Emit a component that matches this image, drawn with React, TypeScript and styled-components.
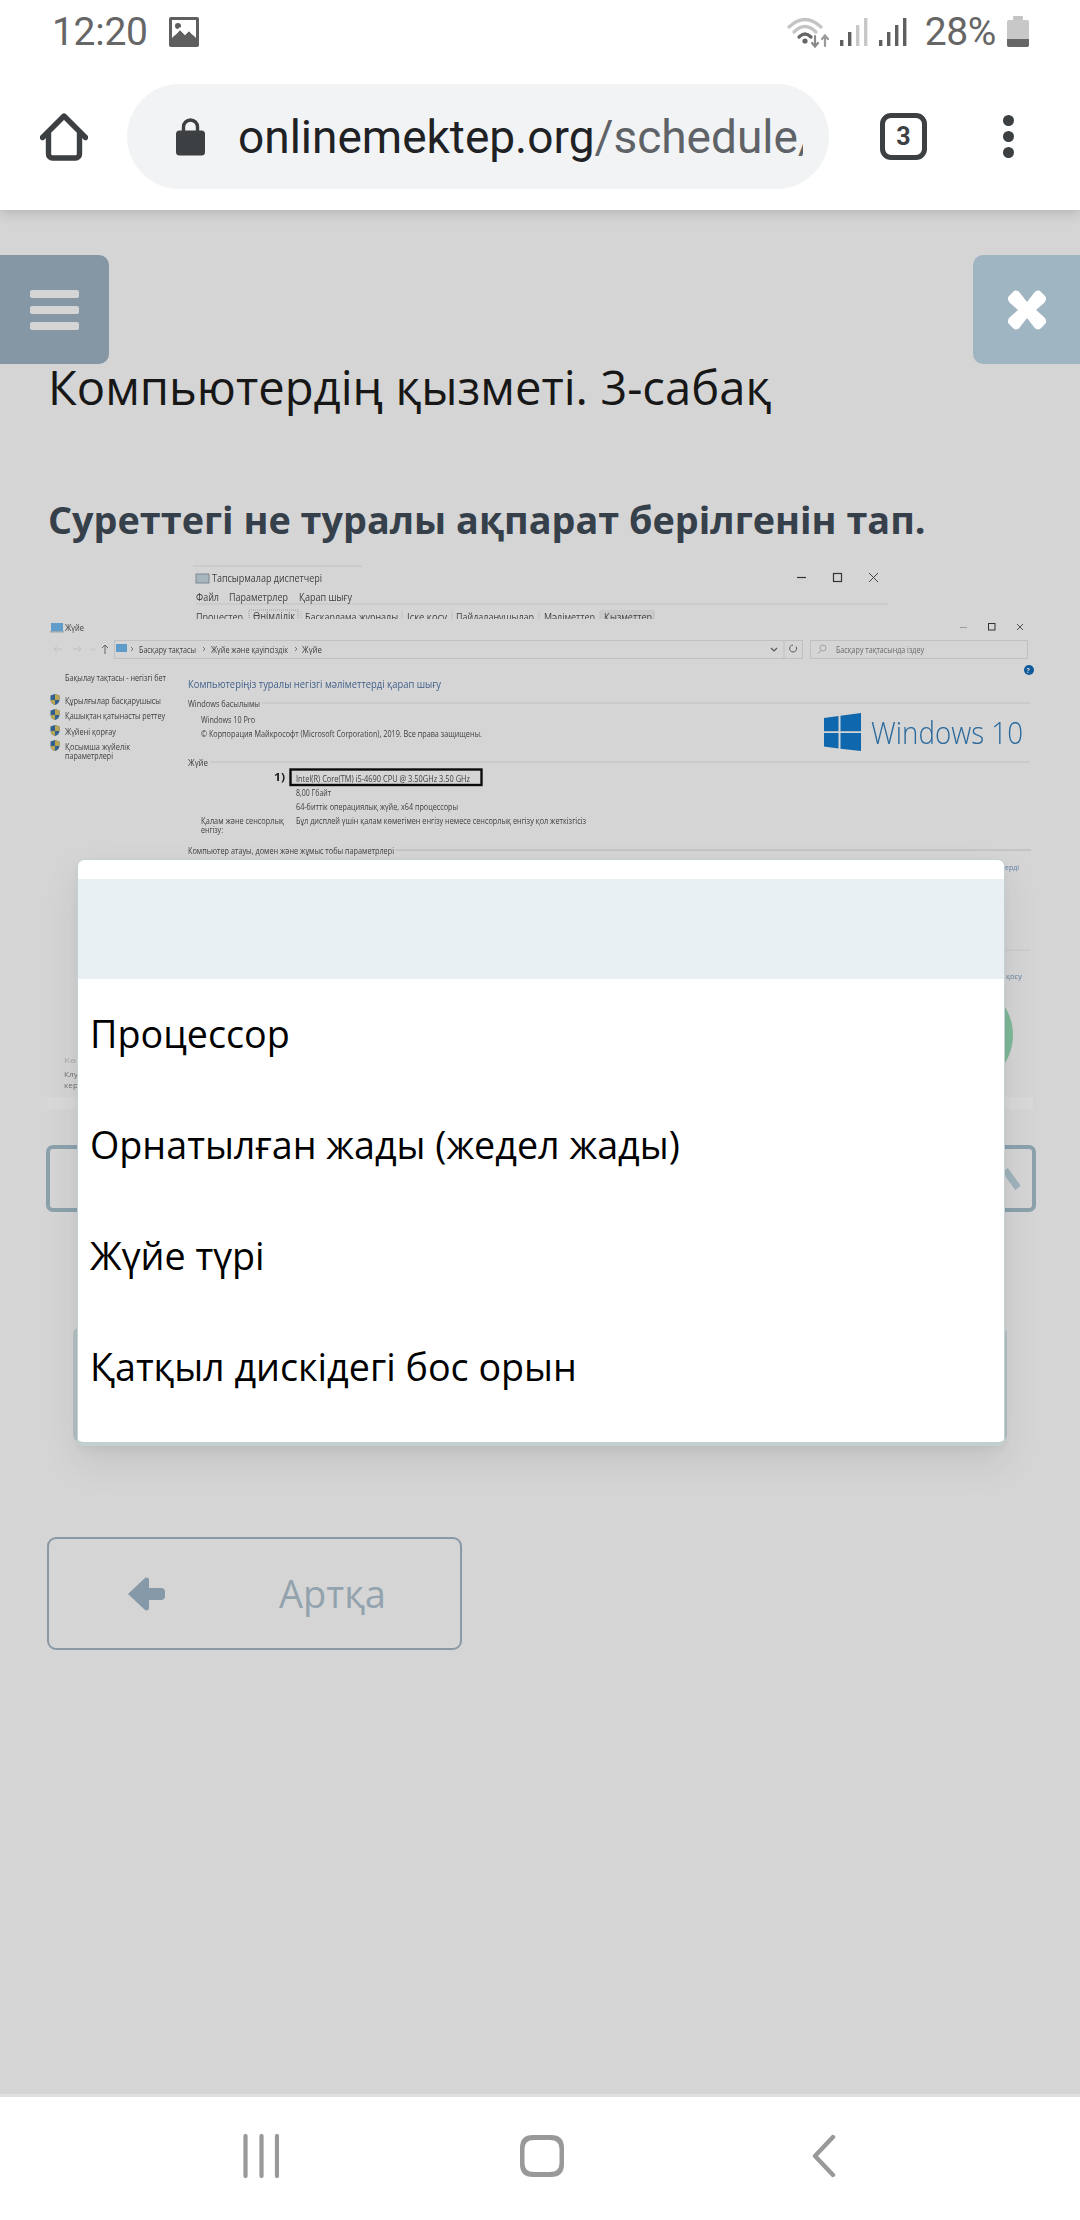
import React from "react";
import styled, { createGlobalStyle } from "styled-components";

const Global = createGlobalStyle`
  html, body { margin: 0; padding: 0; background: #d5d5d5; }
  * { box-sizing: border-box; }
  body { font-family: "Open Sans", "Liberation Sans", sans-serif; }
`;

const Screen = styled.div`
  position: relative;
  width: 1080px;
  height: 2220px;
  display: flex;
  flex-direction: column;
  overflow: hidden;
  background: #d5d5d5;
`;

const Header = styled.header`
  position: relative;
  z-index: 2;
  height: 210px;
  flex: none;
  background: #fff;
  box-shadow: 0 3px 12px rgba(0, 0, 0, 0.16);
`;

const StatusBar = styled.div`
  height: 84px;
  padding: 10px 51px 0 52px;
  display: flex;
  justify-content: space-between;
  align-items: flex-start;
  font-family: Roboto, sans-serif;
  font-size: 39px;
  line-height: 44px;
  color: #666;
`;

const StatusGroup = styled.div`
  display: flex;
  align-items: center;
  height: 44px;
`;

const SignalGroup = styled.div`
  display: flex;
  align-items: center;
  gap: 11px;
  margin-left: 11px;
`;

const TimeText = styled.span`
  margin-right: 21px;
  letter-spacing: -0.3px;
`;

const PercentText = styled.span`
  margin: 0 11px 0 18px;
  letter-spacing: -0.4px;
`;

const UrlRow = styled.div`
  display: flex;
  align-items: center;
  height: 105px;
  padding-left: 40px;
`;

const UrlPill = styled.div`
  width: 702px;
  height: 105px;
  margin-left: 39px;
  padding: 0 26px 0 49px;
  border-radius: 53px;
  background: #f1f3f4;
  display: flex;
  align-items: center;
  gap: 33px;
  flex: none;
`;

const LockIcon = styled.svg`
  flex: none;
`;

const UrlText = styled.div`
  flex: 1;
  min-width: 0;
  overflow: hidden;
  white-space: nowrap;
  font-family: Roboto, sans-serif;
  font-size: 46px;
  color: #202124;
`;

const UrlPath = styled.span`
  color: #5f6368;
`;

const TabBadge = styled.div`
  width: 47px;
  height: 47px;
  margin-left: 51px;
  border: 5px solid #3c4043;
  border-radius: 11px;
  display: flex;
  align-items: center;
  justify-content: center;
  font-family: Roboto, sans-serif;
  font-size: 25px;
  font-weight: 700;
  color: #3c4043;
  flex: none;
`;

const Dots = styled.div`
  margin-left: 76px;
  display: flex;
  flex-direction: column;
  gap: 5px;
`;

const Dot = styled.span`
  width: 11px;
  height: 11px;
  border-radius: 50%;
  background: #3c4043;
`;

const Main = styled.main`
  position: relative;
  flex: 1;
  padding-top: 45px;
  min-height: 0;
`;

const ButtonRow = styled.div`
  display: flex;
  justify-content: space-between;
`;

const SideButton = styled.div<{ $side: "left" | "right" }>`
  height: 109px;
  width: ${(p) => (p.$side === "left" ? 109 : 107)}px;
  background: ${(p) => (p.$side === "left" ? "#8597a5" : "#a0b5c2")};
  border-radius: ${(p) => (p.$side === "left" ? "0 10px 10px 0" : "10px 0 0 10px")};
  display: flex;
  flex-direction: column;
  gap: 8px;
  align-items: ${(p) => (p.$side === "left" ? "flex-start" : "center")};
  justify-content: center;
  padding-left: ${(p) => (p.$side === "left" ? "30px" : "0")};
`;

const MenuBar = styled.span`
  width: 49px;
  height: 8px;
  border-radius: 2px;
  background: #d5d5d5;
`;

const Body = styled.div`
  padding: 0 44px 0 46px;
`;

const Title = styled.h1`
  margin: 0 0 0 2px;
  font-family: "Open Sans", sans-serif;
  font-size: 47.2px;
  line-height: 46px;
  font-weight: 400;
  color: #171717;
  white-space: nowrap;
`;

const Question = styled.h2`
  margin: 86px 0 0 2px;
  height: 48px;
  font-family: "Open Sans", sans-serif;
  font-size: 37.8px;
  line-height: 48px;
  font-weight: 700;
  color: #36404a;
  white-space: nowrap;
`;

const Shot = styled.svg`
  display: block;
  margin-top: 21px;
  width: 990px;
  height: 545px;
  filter: blur(0.35px);
`;

const ShotText = styled.text<{ $size?: number; $color?: string; $weight?: number }>`
  font-family: "Open Sans", "Liberation Sans", sans-serif;
  font-size: ${(p) => p.$size ?? 9}px;
  font-weight: ${(p) => p.$weight ?? 400};
  fill: ${(p) => p.$color ?? "#404040"};
  dominant-baseline: central;
`;

const AnswerField = styled.div`
  position: relative;
  height: 67px;
  margin-top: 35px;
  border: 4px solid #8ba2ac;
  border-radius: 7px;
`;

const PenMark = styled.svg`
  position: absolute;
  right: 12px;
  top: 18px;
`;

const SelectBox = styled.div`
  height: 113px;
  margin: 116px 29px 0 27px;
  border-left: 4px solid #b4c2c6;
  border-right: 4px solid #b4c2c6;
  border-radius: 6px;
`;

const BackButton = styled.div`
  width: 415px;
  height: 113px;
  margin: 96px 0 0 1px;
  border: 2px solid #8a99a5;
  border-radius: 9px;
  display: flex;
  align-items: center;
  padding-left: 78px;
  font-size: 38px;
  color: #93a3ae;
`;

const BackLabel = styled.span`
  margin-left: 114px;
  position: relative;
  top: -1px;
`;

const Modal = styled.div`
  position: absolute;
  z-index: 3;
  left: 78px;
  top: 860px;
  width: 926px;
  height: 585px;
  padding-top: 19px;
  background: #fff;
  border-radius: 6px;
  border-bottom: 3px solid #c1d0ce;
  box-shadow: 0 0 0 1px #c4d1d3, 0 16px 38px rgba(0, 0, 0, 0.09), 0 4px 10px rgba(0, 0, 0, 0.05);
  overflow: hidden;
`;

const OptionRow = styled.div<{ $selected?: boolean }>`
  height: ${(p) => (p.$selected ? 100 : 111)}px;
  padding: 0 0 2px 12px;
  display: flex;
  align-items: center;
  font-family: "Open Sans", sans-serif;
  font-size: 37.7px;
  color: #000;
  background: ${(p) => (p.$selected ? "#e8f0f3" : "transparent")};
`;

const NavBar = styled.nav`
  position: relative;
  z-index: 2;
  height: 126px;
  flex: none;
  background: #fff;
  border-top: 3px solid #e0e0e0;
`;

const NavIcon = styled.svg<{ $left: number }>`
  position: absolute;
  top: 37px;
  left: ${(p) => p.$left}px;
`;

const picture = (
  <svg width="30" height="30" viewBox="0 0 30 30" aria-hidden>
    <rect width="30" height="30" rx="2" fill="#5f5f5f" />
    <rect x="3" y="3" width="24" height="15" fill="#fff" />
    <circle cx="9" cy="9" r="3" fill="#5f5f5f" />
    <path d="M3 22 L11 13 L16 18 L20 14 L27 22 V27 H3Z" fill="#5f5f5f" />
    <path d="M3 21 L11 13 L16 18 L20 14 L27 21 V18 L20 11 L16 15 L11 10 L3 18Z" fill="#fff" />
  </svg>
);

const wifi = (
  <svg width="42" height="32" viewBox="0 0 42 32" aria-hidden fill="none" strokeLinecap="round">
    <path d="M2 11 Q18 -4 34 11" stroke="#c4c4c4" strokeWidth="3.2" />
    <path d="M7 16 Q18 5 29 16" stroke="#c4c4c4" strokeWidth="3.2" />
    <path d="M12 21 Q18 15 24 21" stroke="#666" strokeWidth="3.2" />
    <circle cx="18" cy="25" r="2.6" fill="#666" />
    <path d="M28 20 V30 M25 27 L28 30.5 L31 27" stroke="#8a8a8a" strokeWidth="2.2" />
    <path d="M38 30 V20 M35 23 L38 19.5 L41 23" stroke="#9a9a9a" strokeWidth="2.2" />
  </svg>
);

const Signal = ({ faded }: { faded?: boolean }) => (
  <svg width="28" height="30" viewBox="0 0 28 30" aria-hidden>
    <rect x="0" y="23" width="3.4" height="6" fill="#5f5f5f" />
    <rect x="8" y="15" width="3.4" height="14" fill="#5f5f5f" />
    <rect x="16" y="8" width="3.4" height="21" fill={faded ? "#c8c8c8" : "#5f5f5f"} />
    <rect x="24" y="1" width="3.4" height="28" fill={faded ? "#c8c8c8" : "#5f5f5f"} />
  </svg>
);

const battery = (
  <svg width="22" height="32" viewBox="0 0 22 32" aria-hidden>
    <rect x="6" y="0" width="10" height="4" rx="1" fill="#c4c4c4" />
    <rect x="0" y="4" width="22" height="27" rx="2" fill="#c8c8c8" />
    <path d="M0 23 H22 V29 a2 2 0 0 1 -2 2 H2 a2 2 0 0 1 -2 -2Z" fill="#666" />
  </svg>
);

const home = (
  <svg width="48" height="48" viewBox="0 0 48 48" fill="none" aria-hidden>
    <path d="M2.5 24.5 L24 3 L45.5 24.5" stroke="#3c4043" strokeWidth="5.4" strokeLinecap="round" strokeLinejoin="round" />
    <path d="M8.5 20 V41 a4 4 0 0 0 4 4 H35.5 a4 4 0 0 0 4 -4 V20" stroke="#3c4043" strokeWidth="5.4" />
  </svg>
);

const lock = (
  <LockIcon width="29" height="38" viewBox="0 0 29 38" fill="none" aria-hidden>
    <path d="M7.5 14 V9 a7 7 0 0 1 14 0 V14" stroke="#3c4043" strokeWidth="3.4" />
    <rect x="0" y="12.5" width="29" height="25" rx="3.5" fill="#3c4043" />
  </LockIcon>
);

type Label = [string, number, number, number, number?, string?, number?];
// text, x, centre y, width on screen, size, colour, weight
const labels: Label[] = [
  ["Тапсырмалар диспетчері", 212, 578, 110, 10.5],
  ["Файл", 196, 597, 23, 10.5],
  ["Параметрлер", 229, 597, 59, 10.5],
  ["Қарап шығу", 299, 597, 53, 10.5],
  ["Процестер", 196, 617, 47, 10.5],
  ["Өнімділік", 253, 616, 42, 10.5],
  ["Басқарлама журналы", 305, 617, 93, 10.5],
  ["Іске қосу", 407, 617, 40, 10.5],
  ["Пайдаланушылар", 456, 617, 78, 10.5],
  ["Мәліметтер", 544, 617, 51, 10.5],
  ["Қызметтер", 604, 617, 48, 10.5],
  ["Жүйе", 65, 627, 19, 9],
  ["Басқару тақтасы", 139, 649, 57, 8.5],
  ["Жүйе және қауіпсіздік", 211, 649, 77, 8.5],
  ["Жүйе", 302, 649, 20, 8.5],
  ["Басқару тақтасында іздеу", 836, 649, 88, 8.5, "#6b6b6b"],
  ["Бақылау тақтасы - негізгі бет", 65, 677, 101, 8.5],
  ["Құрылғылар басқарушысы", 65, 700, 96, 8.5],
  ["Қашықтан қатынасты реттеу", 65, 715, 100, 8.5],
  ["Жүйені қорғау", 65, 731, 51, 8.5],
  ["Қосымша жүйелік", 65, 746, 65, 8.5],
  ["параметрлері", 65, 755, 48, 8.5],
  ["Компьютеріңіз туралы негізгі мәліметтерді қарап шығу", 188, 683, 253, 11, "#42618a"],
  ["Windows басылымы", 188, 703, 72, 8.5],
  ["Windows 10 Pro", 201, 719, 54, 8.5],
  ["© Корпорация Майкрософт (Microsoft Corporation), 2019. Все права защищены.", 201, 733, 281, 8.5],
  ["Жүйе", 188, 762, 20, 8.5],
  ["1)", 274, 777, 11, 10, "#222", 700],
  ["Intel(R) Core(TM) i5-4690 CPU @ 3.50GHz   3.50 GHz", 296, 778, 174, 8.5],
  ["8,00 Гбайт", 296, 792, 35, 8.5],
  ["64-биттік операциялық жүйе, x64 процессоры", 296, 806, 162, 8.5],
  ["Қалам және сенсорлық", 201, 820, 83, 8.5],
  ["енгізу:", 201, 829, 22, 8.5],
  ["Бұл дисплей үшін қалам көмегімен енгізу немесе сенсорлық енгізу қол жеткізгісіз", 296, 820, 290, 8.5],
  ["Компьютер атауы, домен және жұмыс тобы параметрлері", 188, 850, 206, 8.5],
  ["ерді", 1005, 866, 14, 8, "#5f7fa0"],
  ["қосу", 1006, 975, 16, 8, "#5f7fa0"],
  ["Кө", 64, 1059, 12, 8, "#a9a9a9"],
  ["Клу", 64, 1073, 14, 8, "#6f6f6f"],
  ["кер", 64, 1084, 14, 8, "#6f6f6f"],
];

const rules: [number, number, number, number, string?][] = [
  [193, 566, 362, 566],
  [196, 604, 888, 604],
  [262, 703, 1030, 703],
  [210, 762, 1030, 762],
  [396, 850, 1031, 850, "#b4b4b4"],
  [1006, 950, 1030, 950, "#c6c6c6"],
];

const shieldY = [700, 715, 731, 746];

const ShotPicture = () => (
  <Shot viewBox="46 565 990 545" role="img" aria-label="Жүйе терезесінің суреті">
    <defs>
      <clipPath id="tabsClip">
        <rect x="190" y="600" width="480" height="19" />
      </clipPath>
    </defs>
    {rules.map(([x1, y1, x2, y2, c], i) => (
      <line key={i} x1={x1} y1={y1} x2={x2} y2={y2} stroke={c ?? "#c2c2c2"} strokeWidth="1" />
    ))}
    <rect x="196" y="574" width="13" height="9" fill="#a7b6bd" stroke="#7c8a90" strokeWidth="1" />
    <path d="M797 577.5 H806" stroke="#333" strokeWidth="1.2" />
    <rect x="833.5" y="573.5" width="8" height="8" fill="none" stroke="#333" strokeWidth="1.2" />
    <path d="M869 573 L878 582 M878 573 L869 582" stroke="#444" strokeWidth="1" />
    <g clipPath="url(#tabsClip)">
      <rect x="600" y="610" width="54" height="10" fill="#cacaca" />
      <rect x="249" y="610" width="49" height="12" fill="none" stroke="#9a9a9a" strokeDasharray="1 1" />
      <path d="M301 611 V619 M402 611 V619 M452 611 V619 M539 611 V619 M600 611 V619 M654 611 V619" stroke="#c2c2c2" />
      {labels.slice(4, 11).map(([t, x, y, w, s], i) => (
        <ShotText key={i} x={x} y={y} textLength={w} lengthAdjust="spacingAndGlyphs" $size={s}>
          {t}
        </ShotText>
      ))}
    </g>
    <rect x="51" y="623" width="12" height="8" fill="#5f9cc9" />
    <rect x="50" y="631" width="14" height="1.5" fill="#9ba9b0" />
    <path d="M960 627.5 H967" stroke="#a0a0a0" strokeWidth="1" />
    <rect x="988.5" y="623.5" width="6.5" height="6.5" fill="none" stroke="#333" strokeWidth="1" />
    <path d="M1017 624 L1023 630 M1023 624 L1017 630" stroke="#444" strokeWidth="0.9" />
    <path d="M54 649 H62 M54 649 L57 646.5 M54 649 L57 651.5 M73 649 H81 M81 649 L78 646.5 M81 649 L78 651.5" stroke="#c0c0c0" strokeWidth="1" fill="none" />
    <path d="M91 648.5 L93 650.5 L95 648.5" stroke="#c0c0c0" fill="none" />
    <path d="M105 654 V645 M102 648 L105 645 L108 648" stroke="#666" strokeWidth="1" fill="none" />
    <rect x="114.5" y="640.5" width="688" height="18" fill="none" stroke="#c0c0c0" />
    <path d="M784 641 V658" stroke="#c0c0c0" />
    <rect x="116" y="644" width="11" height="8" fill="#5f9cc9" />
    <path d="M131 647 L133 649 L131 651 M203 647 L205 649 L203 651 M295 647 L297 649 L295 651" stroke="#777" fill="none" />
    <path d="M771 648 L774 651 L777 648" stroke="#555" strokeWidth="1.2" fill="none" />
    <path d="M793 645 a3.5 3.5 0 1 0 3 1.5" stroke="#555" fill="none" />
    <rect x="810.5" y="640.5" width="217" height="18" fill="none" stroke="#c0c0c0" />
    <circle cx="823" cy="648" r="3" fill="none" stroke="#a0a0a0" />
    <path d="M821 650.5 L818 653.5" stroke="#a0a0a0" />
    <circle cx="1029" cy="670" r="5" fill="#0d5a9c" />
    <ShotText x={1026.5} y={670} $size={7} $weight={700} $color="#d5d5d5">
      ?
    </ShotText>
    {shieldY.map((y) => (
      <g key={y}>
        <path d={`M50.5 ${y - 4.5} L55 ${y - 6} L59.5 ${y - 4.5} V${y} Q59 ${y + 4} 55 ${y + 5} Q51 ${y + 4} 50.5 ${y}Z`} fill="#33608c" />
        <path d={`M55 ${y - 6} L59.5 ${y - 4.5} V${y} H55Z M55 ${y} H50.5 Q51 ${y + 4} 55 ${y + 5}Z`} fill="#b8a652" />
      </g>
    ))}
    {labels
      .filter((_, i) => i < 4 || i > 10)
      .map(([t, x, y, w, s, c, f], i) => (
        <ShotText key={i} x={x} y={y} textLength={w} lengthAdjust="spacingAndGlyphs" $size={s} $color={c} $weight={f}>
          {t}
        </ShotText>
      ))}
    <path d="M824 718 L838.5 716 V731.3 H824Z M840.5 715.7 L861 713 V731.3 H840.5Z M824 733 H838.5 V748.5 L824 746.5Z M840.5 733 H861 V751 L840.5 748.7Z" fill="#0f67ad" />
    <ShotText x={871} y={732} textLength={152} lengthAdjust="spacingAndGlyphs" $size={30.5} $weight={300} $color="#29699c">
      Windows 10
    </ShotText>
    <rect x="290.5" y="769.5" width="191" height="15.5" fill="none" stroke="#0c0c0c" strokeWidth="2.4" />
    <circle cx="960" cy="1035" r="53" fill="#7fb99a" />
    <rect x="47" y="1097" width="986" height="12" fill="#d9d9d9" />
  </Shot>
);

export default function App() {
  return (
    <Screen>
      <Global />
      <Header>
        <StatusBar>
          <StatusGroup>
            <TimeText>12:20</TimeText>
            {picture}
          </StatusGroup>
          <StatusGroup>
            {wifi}
            <SignalGroup>
              <Signal faded />
              <Signal />
            </SignalGroup>
            <PercentText>28%</PercentText>
            {battery}
          </StatusGroup>
        </StatusBar>
        <UrlRow>
          {home}
          <UrlPill>
            {lock}
            <UrlText>
              onlinemektep.org<UrlPath>/schedule/</UrlPath>
            </UrlText>
          </UrlPill>
          <TabBadge>3</TabBadge>
          <Dots>
            <Dot />
            <Dot />
            <Dot />
          </Dots>
        </UrlRow>
      </Header>
      <Main>
        <ButtonRow>
          <SideButton $side="left">
            <MenuBar />
            <MenuBar />
            <MenuBar />
          </SideButton>
          <SideButton $side="right">
            <svg width="40" height="40" viewBox="0 0 40 40" aria-hidden>
              <path d="M7 1 C9 0 12 1 13 3 L20 12 L27 3 C28 1 31 0 33 1 L38 6 C40 8 39 11 37 13 L29 20 L37 27 C39 29 40 32 38 34 L33 39 C31 40 28 39 27 37 L20 28 L13 37 C12 39 9 40 7 39 L2 34 C0 32 1 29 3 27 L11 20 L3 13 C1 11 0 8 2 6Z" fill="#fff" />
            </svg>
          </SideButton>
        </ButtonRow>
        <Body>
          <Title>Компьютердің қызметі. 3-сабақ</Title>
          <Question>Суреттегі не туралы ақпарат берілгенін тап.</Question>
          <ShotPicture />
          <AnswerField>
            <PenMark width="16" height="26" viewBox="0 0 16 26" aria-hidden>
              <path d="M1 3 L14 21" stroke="#9fb4bc" strokeWidth="7" />
            </PenMark>
          </AnswerField>
          <SelectBox />
          <BackButton>
            <svg width="38" height="34" viewBox="0 0 38 34" aria-hidden>
              <path d="M18 1 L1 17 L18 33 C20 34 22 33 22 31 V23 H34 C36.5 23 38 21.5 38 19.5 V14.5 C38 12.5 36.5 11 34 11 H22 V3 C22 1 20 0 18 1Z" fill="#8599a8" />
            </svg>
            <BackLabel>Артқа</BackLabel>
          </BackButton>
        </Body>
      </Main>
      <NavBar>
        <NavIcon $left={243} width="36" height="44" viewBox="0 0 36 44" aria-hidden>
          <path d="M2.5 2 V42 M18.5 2 V42 M34 2 V42" stroke="#999" strokeWidth="4.2" strokeLinecap="round" />
        </NavIcon>
        <NavIcon $left={520} width="44" height="44" viewBox="0 0 44 44" aria-hidden>
          <path fillRule="evenodd" fill="#999" d="M13 1 H31 Q44 1 44 14 V30 Q44 43 31 43 H13 Q0 43 0 30 V14 Q0 1 13 1Z M14 6 Q4.5 6 4.5 15 V29 Q4.5 38 14 38 H30 Q39.5 38 39.5 29 V15 Q39.5 6 30 6Z" />
        </NavIcon>
        <NavIcon $left={812} width="24" height="44" viewBox="0 0 24 44" aria-hidden>
          <path d="M21 3 L3 22 L21 41" stroke="#999" strokeWidth="4.4" fill="none" strokeLinecap="round" strokeLinejoin="round" />
        </NavIcon>
      </NavBar>
      <Modal>
        <OptionRow $selected />
        <OptionRow>Процессор</OptionRow>
        <OptionRow>Орнатылған жады (жедел жады)</OptionRow>
        <OptionRow>Жүйе түрі</OptionRow>
        <OptionRow>Қатқыл дискідегі бос орын</OptionRow>
      </Modal>
    </Screen>
  );
}
